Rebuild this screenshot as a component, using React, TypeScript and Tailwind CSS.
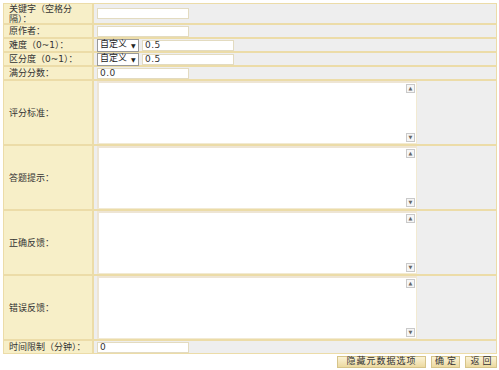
import React from "react";

const font = { fontFamily: '"DejaVu Sans", "Noto Sans CJK SC", sans-serif' };

function Label({ children }: { children: React.ReactNode }) {
  return (
    <div className="w-[88px] shrink-0 bg-[#f7efc8] pl-[5px] pr-[1px] flex items-center text-[9px] leading-[10px] text-[#333]">
      <span>{children}</span>
    </div>
  );
}

function TextInput({ value = "", w = "w-[92px]" }: { value?: string; w?: string }) {
  return (
    <div className={`${w} h-[11px] bg-white border border-[#e3dbc0] text-[9px] leading-[9px] text-[#333] pl-[2px] tracking-[0.5px]`}>
      {value}
    </div>
  );
}

function Select() {
  return (
    <div className="w-[42px] h-[13px] bg-white border border-[#9a9a9a] flex items-center text-[9px] text-[#222] pl-[2px]">
      <span>自定义</span>
      <span className="ml-[4px] text-[6px]">▼</span>
    </div>
  );
}

function Area() {
  return (
    <div className="w-[320px] h-[63px] bg-white border-t-[2px] border-l-[2px] border-[#eee5d4] border-r border-b border-r-[#f2ead2] border-b-[#f2ead2] flex justify-end">
      <div className="w-[9px] flex flex-col justify-between py-[1px] mr-[1px]">
        <div className="w-[9px] h-[9px] border border-[#c9c9c9] bg-[#f6f6f6] flex items-center justify-center text-[5px] text-[#666]">▲</div>
        <div className="w-[9px] h-[9px] border border-[#c9c9c9] bg-[#f6f6f6] flex items-center justify-center text-[5px] text-[#666]">▼</div>
      </div>
    </div>
  );
}

function Row({ label, children, h }: { label: React.ReactNode; children: React.ReactNode; h: string }) {
  return (
    <div className={`flex ${h} gap-[2px]`}>
      <Label>{label}</Label>
      <div className="flex-1 bg-[#eeeeee] flex items-center pl-[3px] gap-[3px]">{children}</div>
    </div>
  );
}

const btn =
  "h-[12px] bg-gradient-to-b from-[#fbf3d6] to-[#ecd9a0] border border-[#d6c48a] flex items-center justify-center whitespace-nowrap";

export default function App() {
  return (
    <div className="w-[499px] h-[370px] bg-white" style={font}>
      <div className="pt-[3px] pl-[3px] w-[497px]">
        <div className="flex flex-col gap-[2px] bg-[#ecdca8] border border-[#ecdca8]">
          <Row label="关键字（空格分隔）：" h="h-[19px]">
            <TextInput />
          </Row>
          <Row label="原作者：" h="h-[12px]">
            <TextInput />
          </Row>
          <Row label="难度（0~1）：" h="h-[12px]">
            <Select />
            <TextInput value="0.5" />
          </Row>
          <Row label="区分度（0~1）：" h="h-[12px]">
            <Select />
            <TextInput value="0.5" />
          </Row>
          <Row label="满分分数：" h="h-[12px]">
            <TextInput value="0.0" />
          </Row>
          <Row label="评分标准：" h="h-[63px]">
            <Area />
          </Row>
          <Row label="答题提示：" h="h-[63px]">
            <Area />
          </Row>
          <Row label="正确反馈：" h="h-[63px]">
            <Area />
          </Row>
          <Row label="错误反馈：" h="h-[63px]">
            <Area />
          </Row>
          <Row label="时间限制（分钟）：" h="h-[12px]">
            <TextInput value="0" />
          </Row>
        </div>
        <div className="flex justify-end gap-[5px] mt-[2px] pr-[0px] text-[9px] text-[#333]">
          <div className={`${btn} w-[89px] tracking-[1px]`}>隐藏元数据选项</div>
          <div className={`${btn} w-[29px]`}>确&nbsp;定</div>
          <div className={`${btn} w-[32px]`}>返&nbsp;回</div>
        </div>
      </div>
    </div>
  );
}
